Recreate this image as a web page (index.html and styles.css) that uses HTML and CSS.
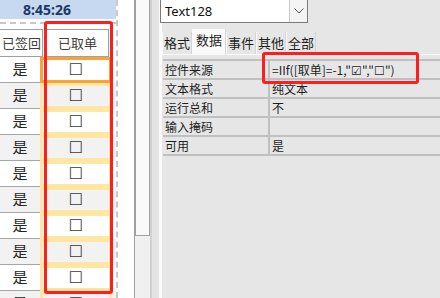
FILE: index.html
```html
<!doctype html>
<html>
<head>
  <title>取单状态</title>
  <link rel="stylesheet" href="styles.css">
</head>
<body>
  <div id="screen">
    <div id="formView">
      <div id="detail">
        <div class="clock">8:45:26</div>
        <div class="headRow">
          <div class="hcell signed">已签回</div>
          <div class="hcell picked">已取单</div>
        </div>
        <div class="row odd"><div class="c1">是</div><div class="c2 current">☐</div></div>
        <div class="row"><div class="c1">是</div><div class="c2">☐</div></div>
        <div class="row odd"><div class="c1">是</div><div class="c2">☐</div></div>
        <div class="row"><div class="c1">是</div><div class="c2">☐</div></div>
        <div class="row odd"><div class="c1">是</div><div class="c2">☐</div></div>
        <div class="row"><div class="c1">是</div><div class="c2">☐</div></div>
        <div class="row odd"><div class="c1">是</div><div class="c2">☐</div></div>
        <div class="row"><div class="c1">是</div><div class="c2">☐</div></div>
        <div class="row odd"><div class="c1">是</div><div class="c2">☐</div></div>
        <div class="row"><div class="c1">是</div><div class="c2">☐</div></div>
      </div>
      <div id="blank"></div>
    </div>

    <div id="vscroll"><div class="thumb"></div></div>
    <div id="splitter"></div>

    <div id="props">
      <div class="combo">
        <span class="comboText">Text128</span>
        <span class="drop">
          <svg width="10" height="6" viewBox="0 0 10 6"><polyline points="0.5,0.5 5,5 9.5,0.5" fill="none" stroke="#555" stroke-width="1"/></svg>
        </span>
      </div>

      <div class="tabs">
        <div class="tab">格式</div>
        <div class="tab active">数据</div>
        <div class="tab">事件</div>
        <div class="tab">其他</div>
        <div class="tab">全部</div>
      </div>

      <div class="sheet">
        <div class="prop"><div class="pname">控件来源</div><div class="pval">=IIf([取单]=-1,"☑","☐")</div></div>
        <div class="prop"><div class="pname">文本格式</div><div class="pval">纯文本</div></div>
        <div class="prop"><div class="pname">运行总和</div><div class="pval">不</div></div>
        <div class="prop"><div class="pname">输入掩码</div><div class="pval"></div></div>
        <div class="prop"><div class="pname">可用</div><div class="pval">是</div></div>
      </div>
    </div>

    <div class="mark markColumn"></div>
    <div class="mark markFormula"></div>
  </div>
</body>
</html>
```

FILE: styles.css
```css
body {
  margin: 0;
  background: #e6e6e6;
  font-family: "Noto Sans", "Noto Sans CJK SC", sans-serif;
}

#screen {
  position: relative;
  width: 440px;
  height: 298px;
  overflow: hidden;
  display: flex;
}

#formView {
  width: 134px;
  height: 298px;
  background: #fff;
  border-right: 1px solid #a0a0a0;
  display: flex;
}

#detail {
  width: 116px;
  border-right: 2px dashed #c8c8c8;
}

#blank {
  flex: 1;
}

.clock {
  height: 19px;
  background: #c6d9f1;
  color: #1f3864;
  font-weight: bold;
  font-size: 14px;
  line-height: 19px;
  padding-left: 23px;
  margin-bottom: 3px;
}

.headRow {
  height: 33px;
  border-top: 2px dashed #c8c8c8;
  display: flex;
  align-items: flex-end;
  gap: 3px;
}

.hcell {
  height: 28px;
  box-sizing: border-box;
  border: 1px solid #a0a0a0;
  font-family: "Noto Sans CJK SC", sans-serif;
  font-size: 13px;
  color: #404040;
  line-height: 26px;
  text-align: center;
}

.hcell.signed {
  width: 43px;
  border-left: none;
  text-align: left;
  padding-left: 2px;
}

.hcell.picked {
  width: 63px;
}

.row {
  height: 26px;
  display: flex;
  background: #f2f2f2;
}

.row.odd {
  background: #fff;
}

.c1 {
  width: 40px;
  box-sizing: border-box;
  border-bottom: 1px solid #a6a6a6;
  font-family: "Noto Sans CJK SC", sans-serif;
  font-size: 15px;
  color: #262626;
  text-align: center;
  line-height: 23px;
}

.c2 {
  width: 72px;
  box-sizing: border-box;
  border: 3px solid #ffe6a3;
  font-family: "DejaVu Sans", sans-serif;
  font-size: 16px;
  color: #3a3a3a;
  text-align: center;
  line-height: 20px;
}

.c2.current {
  border-color: #f9a23a;
}

#vscroll {
  width: 15px;
  background: #f0f0f0;
}

#vscroll .thumb {
  height: 236px;
  background: #f9f9f9;
  border: 1px solid #a0a0a0;
  border-top: none;
  box-sizing: border-box;
}

#splitter {
  width: 7px;
  background: #e4e4e4;
  border-left: 2px solid #d0d0d0;
}

#props {
  flex: 1;
  border-left: 3px solid #fafafa;
  font-family: "Noto Sans CJK SC", sans-serif;
  color: #1e1e1e;
}

.combo {
  width: 148px;
  height: 24px;
  margin-top: -1px;
  margin-left: -2px;
  box-sizing: border-box;
  background: #fff;
  border: 1px solid #7a7a7a;
  display: flex;
}

.comboText {
  flex: 1;
  font-family: "Noto Sans", sans-serif;
  font-size: 13px;
  line-height: 22px;
  padding-left: 4px;
  color: #111;
}

.drop {
  width: 17px;
  border-left: 1px solid #c8c8c8;
  background: #f4f4f4;
  display: flex;
  align-items: center;
  justify-content: center;
}

.tabs {
  display: flex;
  align-items: flex-end;
  height: 30px;
  margin-top: 1px;
  border-bottom: 1px solid #fafafa;
}

.tab {
  height: 22px;
  padding: 0 1px;
  border-left: 1px solid #fafafa;
  border-right: 1px solid #d4d4d4;
  font-size: 13px;
  line-height: 21px;
}

.tab.active {
  height: 26px;
  padding: 0 3px;
  background: #fafafa;
  line-height: 22px;
  margin-bottom: -1px;
}

.sheet {
  margin-top: 4px;
  margin-left: 1px;
  border-top: 2px solid #c0c0c0;
}

.prop {
  display: flex;
  height: 17px;
  border-bottom: 2px solid #c0c0c0;
  font-size: 12px;
  line-height: 18px;
}

.pname {
  width: 103px;
  padding-left: 2px;
  border-right: 2px solid #c0c0c0;
}

.pval {
  padding-left: 2px;
  white-space: nowrap;
}

.mark {
  position: absolute;
  box-sizing: border-box;
  border: 3px solid #ff1e1e;
  border-radius: 3px;
}

.markColumn {
  left: 44px;
  top: 21px;
  width: 69px;
  height: 273px;
}

.markFormula {
  left: 262px;
  top: 52px;
  width: 157px;
  height: 32px;
}
```
